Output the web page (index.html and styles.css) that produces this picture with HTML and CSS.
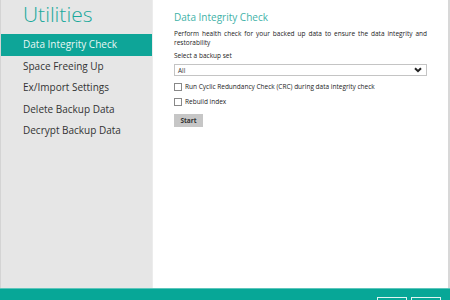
FILE: index.html
```html
<!DOCTYPE html>
<html lang="en">

<head>
    <meta charset="UTF-8">
    <title>Utilities</title>
    <link rel="stylesheet" href="styles.css">
</head>

<body>
    <div class="window">
        <div class="main">
            <aside class="sidebar">
                <h1>Utilities</h1>
                <ul class="menu">
                    <li class="active">Data Integrity Check</li>
                    <li>Space Freeing Up</li>
                    <li>Ex/Import Settings</li>
                    <li>Delete Backup Data</li>
                    <li>Decrypt Backup Data</li>
                </ul>
            </aside>
            <section class="content">
                <h2>Data Integrity Check</h2>
                <p class="desc">Perform health check for your backed up data to ensure the data integrity and restorability</p>
                <label class="field-label">Select a backup set</label>
                <div class="select">
                    <span>All</span>
                    <svg width="8" height="6" viewBox="0 0 8 6"><path d="M1 1.2 L4 4.2 L7 1.2" fill="none" stroke="#222" stroke-width="2"/></svg>
                </div>
                <label class="check"><span class="box"></span>Run Cyclic Redundancy Check (CRC) during data integrity check</label>
                <label class="check"><span class="box"></span>Rebuild index</label>
                <button class="start">Start</button>
            </section>
        </div>
        <footer class="footer">
            <span class="fbtn"></span>
            <span class="fbtn"></span>
        </footer>
    </div>
</body>

</html>
```

FILE: styles.css
```css
* {
    margin: 0;
    padding: 0;
    box-sizing: border-box;
}

body {
    font-family: "Open Sans", "Noto Sans", sans-serif;
    color: #333;
    background: #fff;
}

.window {
    width: 450px;
    height: 300px;
    display: flex;
    flex-direction: column;
    overflow: hidden;
}

.main {
    flex: 1;
    display: flex;
    border-right: 2px solid #d8d8d8;
}

.sidebar {
    width: 152px;
    background: #e6e6e6;
    border-left: 1px solid #d4d4d4;
}

.sidebar h1 {
    font-size: 21px;
    font-weight: 300;
    color: #1aa99c;
    padding: 0 0 0 22px;
    line-height: 28px;
    height: 34px;
}

.menu {
    list-style: none;
}

.menu li {
    font-size: 10px;
    height: 21.5px;
    line-height: 21.5px;
    padding-left: 22px;
    color: #333;
}

.menu li.active {
    background: #0ea598;
    color: #e8f7f5;
}

.content {
    flex: 1;
    padding: 9px 21px 0 21px;
    border-left: 1px solid #ececec;
}

.content h2 {
    font-size: 10px;
    font-weight: 400;
    color: #3fb2a8;
    line-height: 16px;
    margin-bottom: 4px;
}

.desc {
    font-size: 6.5px;
    line-height: 9px;
    text-align: justify;
    color: #222;
}

.field-label {
    display: block;
    font-size: 6.5px;
    line-height: 9px;
    margin-top: 4px;
    color: #222;
}

.select {
    display: flex;
    align-items: center;
    justify-content: space-between;
    height: 12px;
    margin-top: 4px;
    border: 1px solid #c4c4c4;
    padding: 0 4px 0 3px;
    font-size: 6.5px;
}

.check {
    display: flex;
    align-items: center;
    gap: 3px;
    font-size: 6.5px;
    line-height: 8px;
    margin-top: 7px;
    color: #222;
}

.box {
    width: 8px;
    height: 8px;
    border: 1px solid #888;
    background: #fff;
}

.start {
    display: block;
    margin-top: 8px;
    width: 29px;
    height: 13px;
    border: none;
    background: #c6c6c6;
    font-family: inherit;
    font-size: 6.5px;
    font-weight: 700;
    color: #333;
}

.footer {
    height: 12px;
    background: #07a797;
    border-top: 1px solid #5cc6bb;
    display: flex;
    justify-content: flex-end;
    align-items: flex-start;
    gap: 4px;
    padding: 8px 9px 0 0;
}

.fbtn {
    width: 30px;
    height: 10px;
    border: 1px solid #e0f4f2;
}
```
